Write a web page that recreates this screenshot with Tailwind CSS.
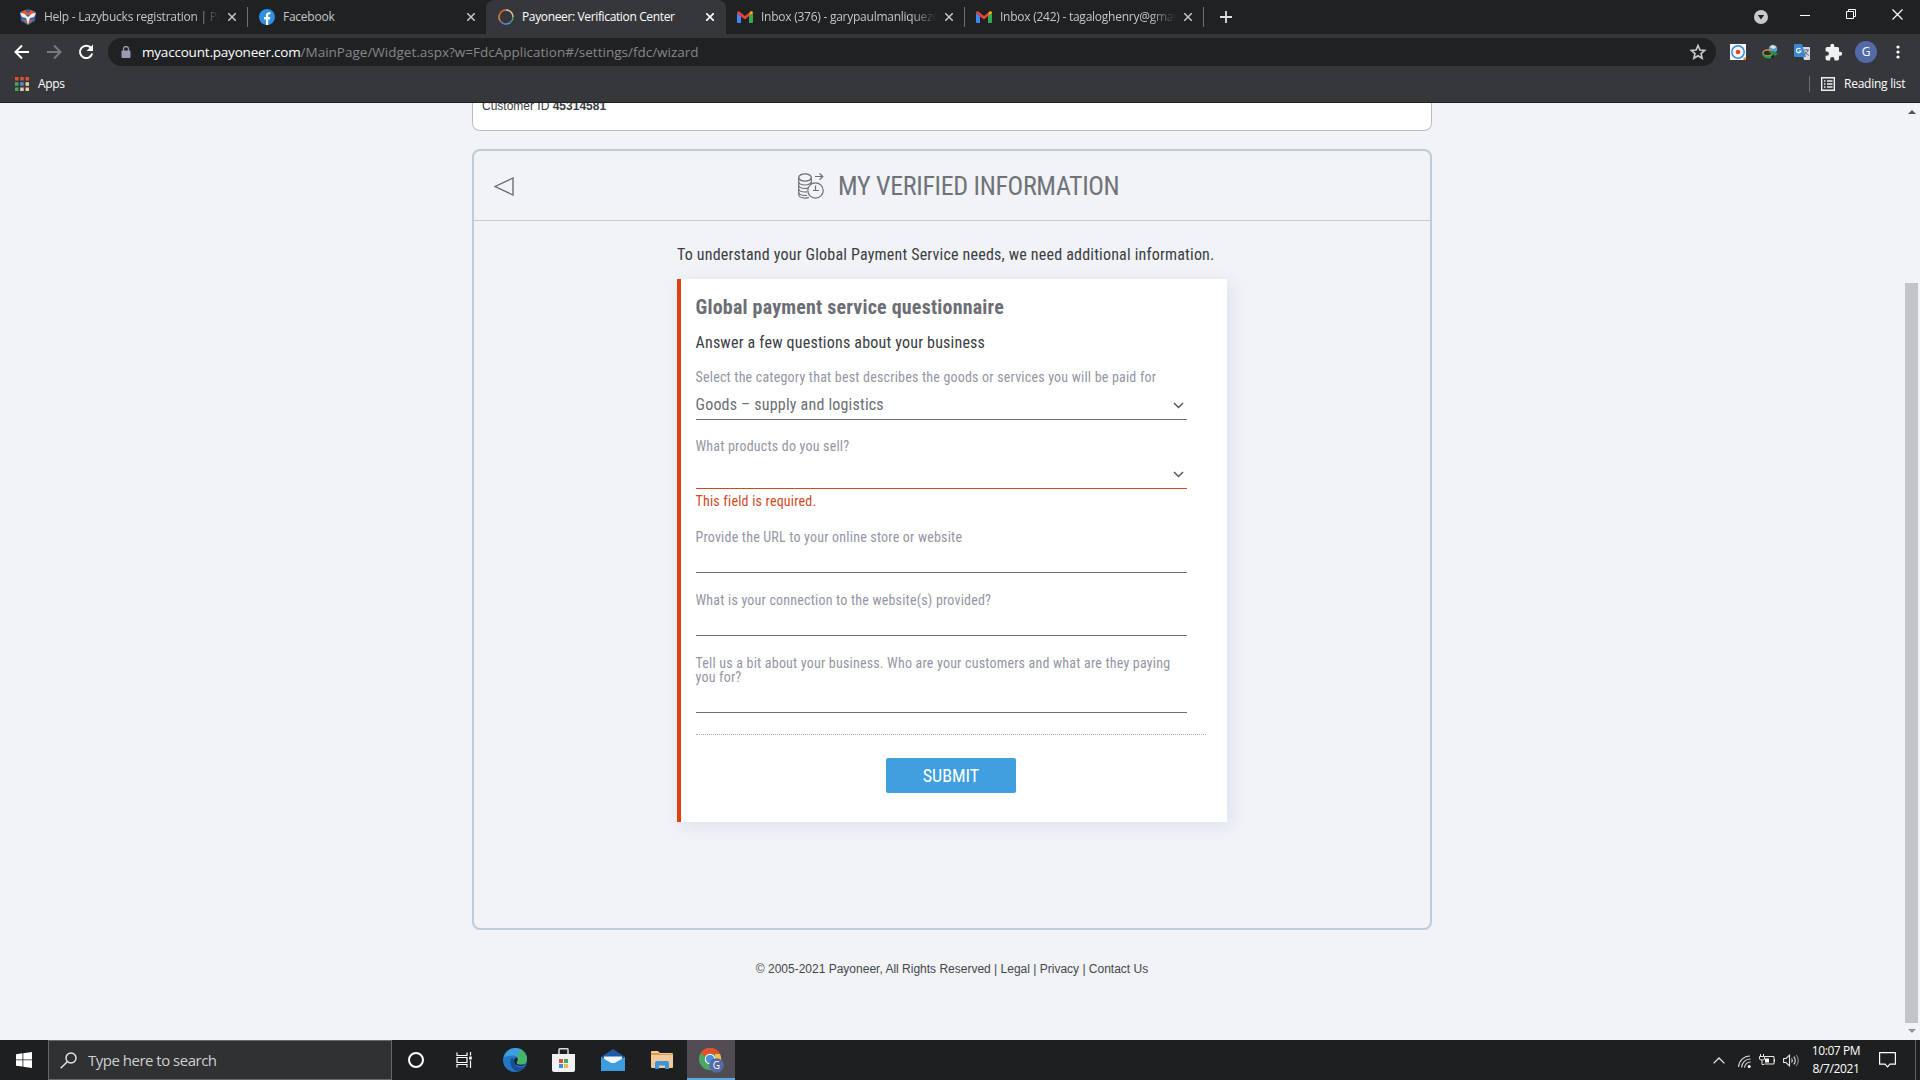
<!DOCTYPE html>
<html lang="en">
<head>
    <meta charset="UTF-8" />
    <title>Payoneer: Verification Center</title>
    <meta name="viewport" content="width=device-width, initial-scale=1.0">
    <script src="https://cdn.jsdelivr.net/npm/@tailwindcss/browser@4"></script>
</head>
<body class="w-[1920px] h-[1080px] overflow-hidden flex flex-col bg-[#f1f3f7] font-['Open_Sans',sans-serif]">
    <!-- Tab strip -->
    <div class="h-[34px] shrink-0 bg-[#202123] flex items-center text-[12px] text-[#c3c6cc] whitespace-nowrap">
        <div class="w-[247px] h-full pl-5 flex items-center">
            <svg class="size-4 shrink-0" viewBox="0 0 16 16"><path d="M0 3l8-3 8 3-1 9-7 4-7-4z" fill="#2c66ab"/><path d="M1 3l4-2 3 3 3-3 4 2-3 3H4z" fill="#e8552d"/><path d="M0 4l4 .5L8 8l4-3.500 4-.5-2 4-4 1-2 7-2-7-4-1z" fill="#eee"/><path d="M2 10l4 1 1 4zM14 10l-4 1-1 4z" fill="#e8552d"/></svg>
            <span class="ml-2 w-[176px] overflow-hidden tracking-[-0.25px] mask-r-from-85%">Help - Lazybucks registration | Pio</span>
            <svg class="ml-2 size-2" viewBox="0 0 8 8" stroke="#c3c6cc" stroke-width="1.5"><path d="M0 0l8 8M8 0L0 8"/></svg>
        </div>
        <div class="w-px h-5 bg-[#6c6e72]"></div>
        <div class="w-[238px] h-full pl-[11px] flex items-center">
            <svg class="size-4 shrink-0" viewBox="0 0 16 16"><circle cx="8" cy="8" r="8" fill="#2f8fe0"/><path d="M7 16v-5.500H5V8h2V6.300C7 4.200 8.200 3.200 10 3.200l1.500.1v2h-1c-1 0-1.300.5-1.300 1.200V8h2.200l-.4 2.500H9.200V16z" fill="#fff"/></svg>
            <span class="ml-2 w-[176px] tracking-[-0.25px]">Facebook</span>
            <svg class="ml-2 size-2" viewBox="0 0 8 8" stroke="#c3c6cc" stroke-width="1.5"><path d="M0 0l8 8M8 0L0 8"/></svg>
        </div>
        <div class="w-[240px] h-full pl-3 flex items-center bg-[#36373b] rounded-t-lg text-white">
            <svg class="size-4 shrink-0" viewBox="0 0 16 16" fill="none" stroke-width="1.500"><path d="M8 1a7 7 0 0 1 7 7" stroke="#e6c59a"/><path d="M15 8a7 7 0 0 1-2.500 5.400" stroke="#45a860"/><path d="M12.500 13.400A7 7 0 0 1 6 14.700" stroke="#4b8de0"/><path d="M6 14.700A7 7 0 0 1 1.500 5.500" stroke="#8a6fa0"/><path d="M2 11.500A7 7 0 0 1 8 1" stroke="#e06a30"/></svg>
            <span class="ml-2 w-[176px] tracking-[-0.36px]">Payoneer: Verification Center</span>
            <svg class="ml-2 size-2" viewBox="0 0 8 8" stroke="#fff" stroke-width="1.700"><path d="M0 0l8 8M8 0L0 8"/></svg>
        </div>
        <div class="w-[238px] h-full pl-[11px] flex items-center">
            <svg class="w-4 h-3 shrink-0" viewBox="0 0 16 12"><path d="M0 2v9q0 1 1 1h3V5z" fill="#4285f4"/><path d="M12 5v7h3q1 0 1-1V2z" fill="#34a853"/><path d="M12 5V1.500L14 .3q2-.6 2 1.700z" fill="#fbbc04"/><path d="M0 2Q0-.3 2 .3L8 5l6-4.700L12 5 8 8.500 4 5.500V12 5z" fill="#ea4335"/></svg>
            <span class="ml-2 w-[176px] overflow-hidden tracking-[-0.25px] mask-r-from-85%">Inbox (376) - garypaulmanliquez@</span>
            <svg class="ml-[8px] size-2" viewBox="0 0 8 8" stroke="#c3c6cc" stroke-width="1.500"><path d="M0 0l8 8M8 0L0 8"/></svg>
        </div>
        <div class="w-px h-5 bg-[#6c6e72]"></div>
        <div class="w-[238px] h-full pl-[11px] flex items-center">
            <svg class="w-4 h-3 shrink-0" viewBox="0 0 16 12"><path d="M0 2v9q0 1 1 1h3V5z" fill="#4285f4"/><path d="M12 5v7h3q1 0 1-1V2z" fill="#34a853"/><path d="M12 5V1.500L14 .3q2-.6 2 1.700z" fill="#fbbc04"/><path d="M0 2Q0-.3 2 .3L8 5l6-4.700L12 5 8 8.500 4 5.500V12 5z" fill="#ea4335"/></svg>
            <span class="ml-2 w-[176px] overflow-hidden tracking-[-0.25px] mask-r-from-85%">Inbox (242) - tagaloghenry@gmail</span>
            <svg class="ml-2 size-2" viewBox="0 0 8 8" stroke="#c3c6cc" stroke-width="1.500"><path d="M0 0l8 8M8 0L0 8"/></svg>
        </div>
        <div class="w-px h-5 bg-[#6c6e72]"></div>
        <svg class="ml-4 size-3" viewBox="0 0 12 12" stroke="#dcdee2" stroke-width="1.800"><path d="M6 0v12M0 6h12"/></svg>
        <!-- Window controls -->
        <div class="ml-auto pr-[17px] pb-[2px] flex items-center">
            <svg class="size-[14px] mt-[2px]" viewBox="0 0 14 14"><circle cx="7" cy="7" r="7" fill="#c8c9cb"/><path d="M3.800 5h6.400L7 9.500z" fill="#202123"/></svg>
            <svg class="ml-8 w-[10px] h-[10px]" viewBox="0 0 10 10" stroke="#fff"><path d="M0 4.500h10"/></svg>
            <svg class="ml-9 mb-1 size-[10px]" viewBox="0 0 10 10" fill="none" stroke="#fff"><path d="M.5 2.500h7v7h-7zM2.500 2.500v-2h7v7h-2"/></svg>
            <svg class="ml-9 mb-1 size-[11px]" viewBox="0 0 11 11" stroke="#fff" stroke-width="1.200"><path d="M.5.5l10 10M10.500.5l-10 10"/></svg>
        </div>
    </div>

    <!-- Toolbar -->
    <div class="h-9 shrink-0 bg-[#36373b] flex items-center">
        <svg class="ml-[14px] size-4" viewBox="0 0 16 16" fill="none" stroke="#fff" stroke-width="2"><path d="M15 8H2M8 1.500L1.500 8 8 14.500"/></svg>
        <svg class="ml-4 size-4" viewBox="0 0 16 16" fill="none" stroke="#77797d" stroke-width="2"><path d="M1 8h13M8 1.500L14.500 8 8 14.500"/></svg>
        <svg class="ml-4 size-4" viewBox="0 0 16 16" fill="none" stroke="#fff" stroke-width="2"><path d="M13.200 4.200A6.200 6.200 0 1 0 14.200 9.500"/><path d="M15 .5V7H8.500z" fill="#fff" stroke="none"/></svg>
        <div class="ml-[14px] w-[1608px] h-7 rounded-full bg-[#202123] flex items-center pl-[13px] pr-[9px]">
            <svg class="w-[10px] h-3" viewBox="0 0 10 12"><path d="M2.500 5V3a2.500 2.500 0 0 1 5 0v2" fill="none" stroke="#9a9bb0" stroke-width="1.300"/><rect x=".5" y="4.500" width="9" height="7.500" rx="1" fill="#9a9bb0"/></svg>
            <span class="ml-[11px] text-[13.500px] leading-7 text-[#85878b] whitespace-nowrap"><span class="text-white tracking-[-0.2px]">myaccount.payoneer.com</span>/MainPage/Widget.aspx?w=FdcApplication#/settings/fdc/wizard</span>
            <svg class="ml-auto size-[18px]" viewBox="0 0 24 24" fill="none" stroke="#c9cacc" stroke-width="2.200"><path d="M12 3.500l2.600 5.800 6.300.6-4.800 4.200 1.400 6.200-5.500-3.300-5.500 3.300 1.400-6.200L3.100 9.900l6.300-.6z"/></svg>
        </div>
        <svg class="ml-[14px] size-4" viewBox="0 0 16 16"><path d="M0 0h16v16H0z" fill="#f4f8fc"/><circle cx="8" cy="8" r="6.200" fill="none" stroke="#3f8bd0" stroke-width="1.500"/><circle cx="8" cy="8" r="2.300" fill="#e2491d"/><path d="M13.500 13.500H16V16h-2.500z" fill="#e8862d"/></svg>
        <svg class="ml-4 size-4" viewBox="0 0 16 16"><circle cx="11" cy="5" r="4.300" fill="#5b9cdb"/><path d="M7.500 3l3-2 4 2-3 2z" fill="#e9e2d0"/><ellipse cx="5.500" cy="9" rx="4.500" ry="3" fill="#2a2b2e" stroke="#c98f45" stroke-width="1.500"/><path d="M1 9.500q1 4 6 4l4-2" fill="none" stroke="#2f9b53" stroke-width="2"/><path d="M6 8l6-1 4 3-5 3 1-2z" fill="#2a8b45"/><path d="M9 12l3-1-1 4z" fill="#151617"/></svg>
        <svg class="ml-4 size-4" viewBox="0 0 16 16"><path d="M7 3h8q1 0 1 1v11q0 1-1 1h-5z" fill="#d5d9e2"/><path d="M0 1q0-1 1-1h7l4 13H1q-1 0-1-1z" fill="#3d87d2"/><path d="M6.500 5A2.300 2.300 0 1 0 7 7H4.800" fill="none" stroke="#fff" stroke-width="1.100"/><path d="M10 6h5M12.500 5v1M14 6q-1 4-4 5M11 7.500q1 3 4 4" fill="none" stroke="#69717f"/></svg>
        <svg class="ml-[14px] size-[19px]" viewBox="0 0 24 24" fill="#f0f1f3"><path d="M20.500 11H19V7a2 2 0 0 0-2-2h-4V3.500a2.500 2.500 0 0 0-5 0V5H4a2 2 0 0 0-2 2v3.800h1.500a2.700 2.700 0 0 1 0 5.400H2V20a2 2 0 0 0 2 2h3.800v-1.500a2.700 2.700 0 0 1 5.400 0V22H17a2 2 0 0 0 2-2v-4h1.500a2.500 2.500 0 0 0 0-5z"/></svg>
        <div class="ml-[12px] size-[22px] rounded-full bg-[#526ba8] text-white text-[12px] leading-[22px] text-center">G</div>
        <svg class="ml-[19px] w-1 h-[14px]" viewBox="0 0 4 14" fill="#fff"><circle cx="2" cy="2" r="1.600"/><circle cx="2" cy="7" r="1.600"/><circle cx="2" cy="12" r="1.600"/></svg>
    </div>

    <!-- Bookmarks bar -->
    <div class="h-[33px] shrink-0 bg-[#36373b] border-b border-[#1f2022] flex items-center text-[12px] text-white pb-[4px]">
        <svg class="ml-[15px] w-[14px] h-[14px]" viewBox="0 0 14 14"><path d="M0 0h3.500v3.500H0zM5.200 0h3.500v3.500H5.200zM10.500 0H14v3.500h-3.500z" fill="#e2502c"/><path d="M0 5.200h3.500v3.500H0zM0 10.500h3.500V14H0z" fill="#4aa564"/><path d="M5.200 5.200h3.500v3.500H5.200z" fill="#4c8fe0"/><path d="M5.200 10.500h3.500V14H5.200zM10.500 5.200H14v3.500h-3.500zM10.500 10.500H14V14h-3.500z" fill="#e8cf9f"/></svg>
        <span class="ml-[9px] tracking-[-0.3px]">Apps</span>
        <div class="ml-auto w-px h-4 bg-[#6c6e72]"></div>
        <svg class="ml-[11px] size-[14px]" viewBox="0 0 14 14" fill="none" stroke="#f0f0f2" stroke-width="1.400"><path d="M.7.7h12.600v12.600H.7z"/><path d="M3 4h1.500M6 4h5.500M3 7h1.500M6 7h5.500M3 10h1.500M6 10h5.500"/></svg>
        <span class="ml-[9px] mr-[14px] w-[62px] whitespace-nowrap tracking-[-0.25px]">Reading list</span>
    </div>

    <!-- Page -->
    <div class="flex-1 min-h-0 flex">
        <main class="w-[1904px] flex flex-col items-center font-['Roboto_Condensed','Roboto',sans-serif] font-stretch-condensed">
            <div class="w-[960px] h-7 shrink-0 bg-white border border-t-0 border-[#b9bcc2] rounded-b-lg overflow-hidden pl-[9px]">
                <p class="-mt-[5px] leading-4 text-[12px] text-[#3a3d42] font-['Liberation_Sans',sans-serif] font-stretch-normal">Customer ID <b>45314581</b></p>
            </div>

            <section class="mt-[18px] w-[960px] h-[781px] shrink-0 border-2 border-[#bfcbd9] rounded-lg flex flex-col items-center">
                <header class="w-full h-[70px] shrink-0 border-b border-[#bfcbd9] flex items-center pl-5 pt-px">
                    <svg class="w-5 h-[19px]" viewBox="0 0 20 19" fill="none" stroke="#62656b" stroke-width="1.300"><path d="M1 9.500L19 1v17z"/></svg>
                    <svg class="ml-[284px] size-[26px]" viewBox="0 0 26 26" fill="none" stroke="#6b6f75" stroke-width="1.200"><ellipse cx="7" cy="4.500" rx="6.300" ry="3.700"/><path d="M.7 4.500v17c0 2 2.800 3.600 6.300 3.600 1.500 0 2.700-.2 3.800-.7M13.300 4.500v6M.7 8.500c0 2 2.800 3.500 6.300 3.500s6.300-1.500 6.300-3.500M.7 12c0 2 2.800 3.500 6.300 3.500 1.200 0 2-.1 3-.4M.7 15.500C.7 17.500 3.500 19 7 19l2-.2M.7 19c0 2 2.800 3.500 6.300 3.500l2-.2"/><circle cx="17.500" cy="17.500" r="7.700"/><path d="M17.500 12.500v5h3.500M15 17.500h2.500M17 3.500h8M21.500.5l3.300 3-3.300 3.200"/></svg>
                    <h1 class="ml-[14px] text-[26px] text-[#6f7379] whitespace-nowrap tracking-[-0.33px]">MY VERIFIED INFORMATION</h1>
                </header>

                <div class="mt-[23px] w-[550px]">
                    <p class="h-[22px] leading-[22px] text-[16px] text-[#3a3e44] whitespace-nowrap tracking-[0.19px]">To understand your Global Payment Service needs, we need additional information.</p>

                    <!-- Questionnaire -->
                    <form class="mt-[13px] h-[543px] bg-white border-l-4 border-[#e04010] pl-[14.5px] pt-[14px] shadow-[4px_4px_16px_rgba(150,180,210,0.25)]">
                        <h2 class="h-7 leading-7 text-[20px] font-bold text-[#6b6f75] whitespace-nowrap tracking-[0.2px]">Global payment service questionnaire</h2>
                        <p class="mt-[12px] h-5 leading-5 text-[16px] text-[#3a3e44] whitespace-nowrap tracking-[0.2px]">Answer a few questions about your business</p>

                        <div class="mt-[17px] w-[491px] text-[14px] leading-[14px] text-[#9495a5] tracking-[0.2px]">
                            <label class="block whitespace-nowrap">Select the category that best describes the goods or services you will be paid for</label>
                            <div class="h-9 pt-[7px] pr-[3px] border-b border-[#6e7075] flex items-center justify-between text-[16px] leading-5 text-[#6b6f75] tracking-[0.2px]">
                                <span>Goods – supply and logistics</span>
                                <svg class="w-[11px] h-[7px]" viewBox="0 0 11 7" fill="none" stroke="#55585e" stroke-width="1.500"><path d="M1 1l4.500 4.500L10 1"/></svg>
                            </div>

                            <label class="mt-[19px] block">What products do you sell?</label>
                            <div class="h-9 pt-[7px] pr-[3px] border-b border-[#cf4a23] flex items-center justify-end">
                                <svg class="w-[11px] h-[7px]" viewBox="0 0 11 7" fill="none" stroke="#55585e" stroke-width="1.500"><path d="M1 1l4.500 4.500L10 1"/></svg>
                            </div>
                            <p class="mt-[5px] text-[#cf4a23]">This field is required.</p>

                            <label class="mt-[22px] block">Provide the URL to your online store or website</label>
                            <div class="h-[29px] border-b border-[#6e7075]"></div>

                            <label class="mt-5 block">What is your connection to the website(s) provided?</label>
                            <div class="h-[29px] border-b border-[#6e7075]"></div>

                            <label class="mt-5 block whitespace-nowrap">Tell us a bit about your business. Who are your customers and what are they paying<br>you for?</label>
                            <div class="h-[29px] border-b border-[#6e7075]"></div>
                        </div>

                        <div class="mt-[21px] w-[510px] border-t border-dotted border-[#a9acb1]"></div>
                        <button type="button" class="mt-[23px] ml-[190.5px] w-[130px] h-[35px] rounded-[2px] bg-[#409fdd] text-white text-[18px]">SUBMIT</button>
                    </form>
                </div>
            </section>

            <footer class="mt-[31px] leading-4 text-[12px] text-[#44474c] whitespace-nowrap font-['Liberation_Sans',sans-serif] font-stretch-normal">© 2005-2021 Payoneer, All Rights Reserved | Legal | Privacy | Contact Us</footer>
        </main>

        <!-- Scrollbar -->
        <div class="w-4 pr-px flex flex-col items-center">
            <svg class="mt-[7px] w-2 h-1" viewBox="0 0 8 4"><path d="M0 4l4-4 4 4z" fill="#505257"/></svg>
            <div class="mt-[169px] w-[13px] h-[740px] bg-[#c3c4c7]"></div>
            <svg class="mt-[6px] w-2 h-1" viewBox="0 0 8 4"><path d="M0 0l4 4 4-4z" fill="#8f90b0"/></svg>
        </div>
    </div>

    <!-- Taskbar -->
    <div class="h-10 shrink-0 bg-[#1e1f20] flex items-center">
        <svg class="ml-4 size-4" viewBox="0 0 16 16" fill="#fff"><path d="M0 2.200l6.500-.9v6.200H0zM7.300 1.200L16 0v7.500H7.300zM0 8.300h6.500v6.200L0 13.700zM7.300 8.300H16V16l-8.700-1.200z"/></svg>
        <div class="ml-4 w-[344px] h-10 bg-[#303132] border border-[#67686a] flex items-center pl-[11px]">
            <svg class="size-[17px]" viewBox="0 0 17 17" fill="none" stroke="#e8e8e8" stroke-width="1.400"><circle cx="11" cy="6" r="5"/><path d="M7.500 9.500L.7 16.300"/></svg>
            <span class="ml-[11px] text-[15px] text-[#cfd0d1] tracking-[-0.5px]">Type here to search</span>
        </div>
        <svg class="ml-4 size-4" viewBox="0 0 16 16" fill="none" stroke="#fff" stroke-width="2"><circle cx="8" cy="8" r="7"/></svg>
        <svg class="ml-8 size-4" viewBox="0 0 16 16" fill="none" stroke="#fff" stroke-width="1.200"><path d="M1 .5v3h10v-3M1 15.500v-3h10v3M1 5.500h10v5H1zM14.500 0v3.500M14.500 8.500V16"/><path d="M13.200 4.500h2.600v3h-2.600z" fill="#fff" stroke="none"/></svg>
        <svg class="ml-[31px] size-6" viewBox="0 0 24 24"><circle cx="12" cy="12" r="12" fill="#2676c8"/><path d="M1 9C3 3 8 0 12.500 0 19 0 24 5 24 10.500c0 4-3 6-6.500 6-3 0-4.500-1.500-3.500-3 2-3.500-.5-6-4-6-4 0-7 1-9 1.500z" fill="#3aa0dd"/><path d="M17 1.500c4.500 2 7 6 7 9.500 0 4-3 5.500-6.500 5.500-3 0-4.500-1.500-3.500-3 1-1.500 1-3 .5-4z" fill="#45b568"/><path d="M8.500 10c-3 5 0 12.500 6.500 13.500 3-.5 6-2.500 7.500-5.500-5 2.500-10.500 1-11-3.500-.1-1.500.3-2.500 1-3z" fill="#174f94"/><path d="M15.500 16.400c-2.500-.6-2-2.200-1.300-3.200.8-1.200.6-2.600-.2-3.600-2 0-3.200 2.200-2.500 4.900.5 2.500 4 4 8.500 3.200l3-1.700c-2 .8-5 .9-7.500.4z" fill="#1e1f20"/></svg>
        <svg class="ml-[25px] w-[23px] h-6" viewBox="0 0 23 24"><path d="M7 7V1.500q0-.7.7-.7h7.600q.7 0 .7.700V7" fill="none" stroke="#dcdcdc" stroke-width="1.500"/><path d="M0 6h23v16q0 2-2 2H2q-2 0-2-2z" fill="#f1f1f1"/><path d="M7 11h4v4H7z" fill="#e2502c"/><path d="M12 11h4v4h-4z" fill="#4aa564"/><path d="M7 16h4v4H7z" fill="#3d8fd8"/><path d="M12 16h4v4h-4z" fill="#e9b95a"/></svg>
        <svg class="ml-[26px] w-6 h-[22px]" viewBox="0 0 24 22"><path d="M0 8l12-8 12 8v5H0z" fill="#1e5ca6"/><path d="M3 7.500h18v7H3z" fill="#f2f6fb"/><path d="M0 8l12 7 12-7v14H0z" fill="#3d9be0"/></svg>
        <svg class="ml-[26px] w-[22px] h-[18px]" viewBox="0 0 22 18"><path d="M0 1q0-1 1-1h6l2 2h12q1 0 1 1v13q0 1-1 1H1q-1 0-1-1z" fill="#f2c99a"/><path d="M0 2h8l1 1h13v1H0z" fill="#d99c4e"/><path d="M4 18v-6q0-2 2-2h10q2 0 2 2v6h-4v-3.500H8V18z" fill="#3d96dc"/></svg>
        <div class="ml-[14px] w-12 h-10 bg-[#514c52] border-b-2 border-[#58a9e4] flex justify-center items-center">
            <svg class="w-[25px] h-[25px] mt-[3px]" viewBox="0 0 25 25"><circle cx="11" cy="11" r="11" fill="#4aa860"/><path d="M11 11L1.500 5.500A11 11 0 0 1 21 6H11z" fill="#e2502c"/><path d="M11 22l5-8V6h5a11 11 0 0 1-10 16z" fill="#f0c04a"/><circle cx="11" cy="11" r="5.200" fill="#fff"/><circle cx="11" cy="11" r="4.200" fill="#4a90dd"/><circle cx="17.500" cy="17.500" r="7.300" fill="#536aa5"/><text x="17.500" y="21.200" font-size="10" fill="#fff" text-anchor="middle">G</text></svg>
        </div>

        <!-- Tray -->
        <div class="ml-auto flex items-center">
            <svg class="w-3 h-[7px]" viewBox="0 0 12 7" fill="none" stroke="#e6e6e6" stroke-width="1.300"><path d="M.6 6.400L6 1l5.400 5.400"/></svg>
            <svg class="ml-[13px] mt-[2px] size-[13px]" viewBox="0 0 13 13" fill="none" stroke="#d9d9d9" stroke-width="1.100"><path d="M.6 12A11.500 11.500 0 0 1 12 1M3.600 12.500A8.700 8.700 0 0 1 12.500 4M6.500 12.800A6 6 0 0 1 12.700 7"/><circle cx="11.200" cy="11.500" r="1.500" fill="#fff" stroke="none"/></svg>
            <svg class="ml-[8px] w-4 h-3" viewBox="0 0 16 12" fill="none" stroke="#e6e6e6"><path d="M6 2.500h9v7.500H5.500M1.500 0v2M4.500 0v2M.5 2.500h5V5q0 1-2.500 1T.5 5zM3 6v4.500h2"/><path d="M6 4.500h4v4H6z" fill="#fff" stroke="none"/><path d="M15.500 5v3"/></svg>
            <svg class="ml-[8px] w-[17px] h-[13px]" viewBox="0 0 17 13" fill="none" stroke="#e6e6e6" stroke-width="1.100"><path d="M.6 4.500H3L6.500 1.200v10.600L3 8.500H.6zM8.500 4.500q1.500 2 0 4M10.800 2.700q3 3.800 0 7.600"/><path d="M13.300 1q4 5.500 0 11" stroke="#87888a"/></svg>
            <div class="ml-[11px] w-[50px] text-[12px] leading-[18px] text-white text-center whitespace-nowrap tracking-[-0.4px]">
                <p>10:07 PM</p>
                <p>8/7/2021</p>
            </div>
            <svg class="ml-[18px] w-[17px] h-4" viewBox="0 0 17 16" fill="none" stroke="#fff" stroke-width="1.200"><path d="M.6.6h15.800v11.600h-5.400l-2.500 2.600-2.500-2.600H.6z"/></svg>
            <div class="ml-[19px] mr-1 w-px h-10 bg-[#5e5f61]"></div>
        </div>
    </div>
</body>
</html>
